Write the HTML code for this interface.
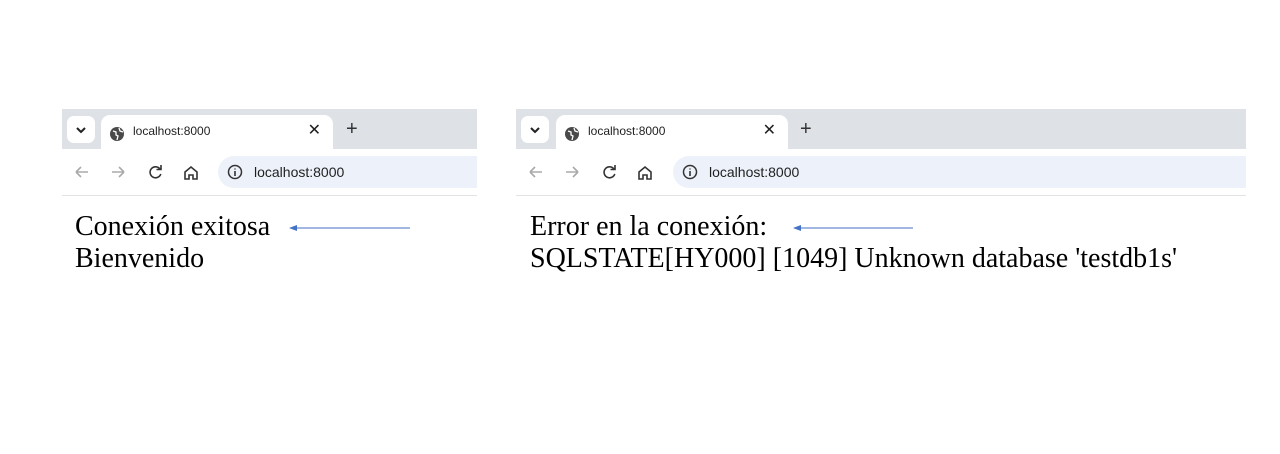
<!DOCTYPE html>
<html><head><style>
body{margin:0;width:1280px;height:454px;background:#fff;position:relative;overflow:hidden;font-family:"Liberation Sans",sans-serif}
.w{position:absolute;top:109px;height:88px}
.strip{position:absolute;left:0;right:0;top:0;height:40px;background:#dee1e6}
.dd{position:absolute;left:5px;top:7px;width:28px;height:27px;background:#fff;border-radius:7px}
.tab{position:absolute;left:39px;top:6px;width:232px;height:40px;background:#fff;border-radius:9px 9px 0 0}
.tab .t{position:absolute;left:32px;top:9px;font-size:12px;color:#1f1f1f}
.tab .x{position:absolute;right:12px;top:5px;font-size:16px;color:#1f1f1f}
.plus{position:absolute;left:284px;top:9px;font-size:20px;color:#333}
.tb{position:absolute;left:0;right:0;top:40px;height:46px;background:#fff;border-bottom:1px solid #e3e3e3}
.addr{position:absolute;left:156px;right:0;top:7px;height:32px;background:#edf2fa;border-radius:16px 0 0 16px}
.addr .t{position:absolute;left:36px;top:8px;font-size:14px;color:#1f1f1f}
.txt{position:absolute;font-family:"Liberation Serif",serif;font-size:28px;line-height:32px;color:#000}
</style></head><body>

<div class="w" style="left:62px;width:415px">
 <div class="strip"></div>
 <div class="dd"><svg width="28" height="27"><path d="M10 12l4 4 4-4" stroke="#222" stroke-width="2" fill="none"/></svg></div>
 <div class="tab"><svg style="position:absolute;left:9px;top:12px" width="14" height="14"><circle cx="7" cy="7" r="7" fill="#4a4a4a"/><path d="M3 4l3 1 0 3 2 1-1 4M9 1l1 3 3 1" stroke="#fff" stroke-width="1.3" fill="none"/></svg><span class="t">localhost:8000</span><span class="x">✕</span></div>
 <div class="plus">+</div>
 <div class="tb">
  <svg style="position:absolute;left:12px;top:14px" width="160" height="18" fill="none" stroke-width="1.6">
   <path d="M2 9h12M2 9l5-5M2 9l5 5" stroke="#aaa"/>
   <path d="M38 9h12M50 9l-5-5M50 9l-5 5" stroke="#aaa"/>
   <path d="M86 6a5.5 5.5 0 1 0 0.8 5M87 2v4.5h-4.5" stroke="#333"/>
   <path d="M111 9l6-5 6 5v7h-4v-4h-4v4h-4z" stroke="#333"/>
  </svg>
  <div class="addr"><svg style="position:absolute;left:9px;top:8px" width="16" height="16"><circle cx="8" cy="8" r="6.5" stroke="#333" stroke-width="1.5" fill="none"/><path d="M8 7v5M8 4.5v1" stroke="#333" stroke-width="1.6"/></svg><span class="t">localhost:8000</span></div>
 </div>
</div>

<div class="w" style="left:516px;width:730px">
 <div class="strip"></div>
 <div class="dd"><svg width="28" height="27"><path d="M10 12l4 4 4-4" stroke="#222" stroke-width="2" fill="none"/></svg></div>
 <div class="tab" style="left:40px"><svg style="position:absolute;left:9px;top:12px" width="14" height="14"><circle cx="7" cy="7" r="7" fill="#4a4a4a"/><path d="M3 4l3 1 0 3 2 1-1 4M9 1l1 3 3 1" stroke="#fff" stroke-width="1.3" fill="none"/></svg><span class="t">localhost:8000</span><span class="x">✕</span></div>
 <div class="plus">+</div>
 <div class="tb">
  <svg style="position:absolute;left:12px;top:14px" width="160" height="18" fill="none" stroke-width="1.6">
   <path d="M2 9h12M2 9l5-5M2 9l5 5" stroke="#aaa"/>
   <path d="M38 9h12M50 9l-5-5M50 9l-5 5" stroke="#aaa"/>
   <path d="M86 6a5.5 5.5 0 1 0 0.8 5M87 2v4.5h-4.5" stroke="#333"/>
   <path d="M111 9l6-5 6 5v7h-4v-4h-4v4h-4z" stroke="#333"/>
  </svg>
  <div class="addr" style="left:157px"><svg style="position:absolute;left:9px;top:8px" width="16" height="16"><circle cx="8" cy="8" r="6.5" stroke="#333" stroke-width="1.5" fill="none"/><path d="M8 7v5M8 4.5v1" stroke="#333" stroke-width="1.6"/></svg><span class="t">localhost:8000</span></div>
 </div>
</div>

<div class="txt" style="left:75px;top:211px">Conexión exitosa<br>Bienvenido</div>
<div class="txt" style="left:530px;top:211px">Error en la conexión:<br>SQLSTATE[HY000] [1049] Unknown database 'testdb1s'</div>

<svg style="position:absolute;left:0;top:0" width="1280" height="454">
 <path d="M296 228H410" stroke="#4472c4" stroke-width="1"/><path d="M289 228l8-3v6z" fill="#4472c4"/>
 <path d="M800 228H913" stroke="#4472c4" stroke-width="1"/><path d="M793 228l8-3v6z" fill="#4472c4"/>
</svg>
</body></html>
